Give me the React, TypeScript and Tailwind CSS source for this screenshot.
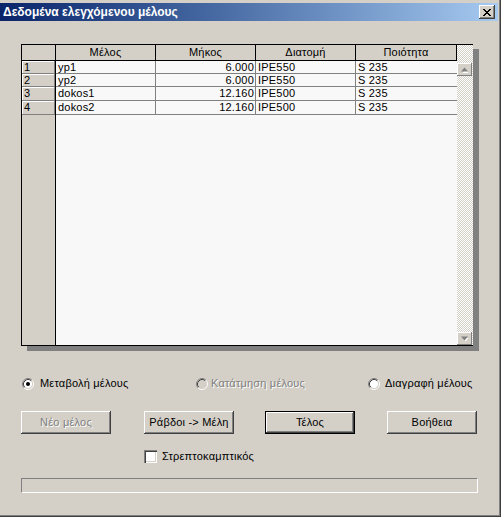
import React from "react";

const raised =
  "shadow-[inset_-1px_-1px_#404040,inset_1px_1px_#ffffff,inset_-2px_-2px_#808080,inset_2px_2px_#d4d0c8]";

function Radio({ checked, disabled }: { checked?: boolean; disabled?: boolean }) {
  return (
    <svg width="12" height="12" viewBox="0 0 12 12" className="shrink-0">
      <circle cx="6" cy="6" r="4.5" fill={disabled ? "#d4d0c8" : "#ffffff"} />
      <path d="M2.11 9.89 A5.5 5.5 0 0 1 9.89 2.11" stroke="#808080" strokeWidth="1" fill="none" />
      <path d="M9.89 2.11 A5.5 5.5 0 0 1 2.11 9.89" stroke="#ffffff" strokeWidth="1" fill="none" />
      <path d="M2.82 9.18 A4.5 4.5 0 0 1 9.18 2.82" stroke="#404040" strokeWidth="1" fill="none" />
      <path d="M9.18 2.82 A4.5 4.5 0 0 1 2.82 9.18" stroke="#d4d0c8" strokeWidth="1" fill="none" />
      {checked && <circle cx="6" cy="6" r="2" fill="#000000" />}
    </svg>
  );
}

function Arrow({ up }: { up?: boolean }) {
  return (
    <svg width="9" height="6" viewBox="0 0 9 6">
      {up ? (
        <>
          <path d="M1.5 5 L4.5 1.5 L7.5 5 Z" fill="#ffffff" transform="translate(1 1)" />
          <path d="M1 4.5 L4.5 0.5 L8 4.5 Z" fill="#808080" />
        </>
      ) : (
        <>
          <path d="M1.5 1 L4.5 4.5 L7.5 1 Z" fill="#ffffff" transform="translate(1 1)" />
          <path d="M1 0.5 L4.5 4.5 L8 0.5 Z" fill="#808080" />
        </>
      )}
    </svg>
  );
}

const rows = [
  { n: "1", m: "yp1", l: "6.000", d: "IPE550", q: "S 235", h: "h-[13px]" },
  { n: "2", m: "yp2", l: "6.000", d: "IPE550", q: "S 235", h: "h-[13px]" },
  { n: "3", m: "dokos1", l: "12.160", d: "IPE500", q: "S 235", h: "h-[14px]" },
  { n: "4", m: "dokos2", l: "12.160", d: "IPE500", q: "S 235", h: "h-[14px]" },
];

export default function App() {
  const disabledText = "text-[#808080] [text-shadow:1px_1px_0_#ffffff]";
  return (
    <div className="relative w-[501px] h-[517px] bg-[#d4d0c8] font-['Liberation_Sans',Arial,sans-serif] text-[11px] tracking-[0.2px] text-black flex flex-col shadow-[inset_-1px_-1px_#404040,inset_-2px_-2px_#808080] overflow-hidden">
      {/* Title bar */}
      <div className="mt-[3px] mr-[3px] h-[18px] bg-gradient-to-r from-[#0a246a] to-[#a6caf0] flex items-center justify-between pl-[3px] pr-[3px]">
        <span className="text-white font-bold text-[12px] tracking-normal leading-none">Δεδομένα ελεγχόμενου μέλους</span>
        <div className={`w-[16px] h-[14px] bg-[#d4d0c8] flex items-center justify-center ${raised}`}>
          <svg width="8" height="7" viewBox="0 0 8 7" shapeRendering="crispEdges">
            <path d="M0 0h2v1h1v1h2v-1h1v-1h2v1h-1v1h-1v1h-1v1h1v1h1v1h1v1h-2v-1h-1v-1h-2v1h-1v1h-2v-1h1v-1h1v-1h1v-1h-1v-1h-1v-1h-1z" fill="#000" />
          </svg>
        </div>
      </div>

      <div className="pl-[21px] pt-[23px] flex flex-col">
        {/* Grid */}
        <div className="w-[452px] h-[302px] border-l border-t border-b border-black flex shadow-[6px_5px_0_0_#808080]">
          <div className="w-[435px] flex flex-col">
            <div className="flex h-[16px] border-b border-black bg-[#d4d0c8] leading-[15px]">
              <div className="w-[34px] border-r border-black" />
              <div className="w-[100px] border-r border-black text-center">Μέλος</div>
              <div className="w-[100px] border-r border-black text-center">Μήκος</div>
              <div className="w-[100px] border-r border-black text-center">Διατομή</div>
              <div className="w-[101px] border-r border-black text-center">Ποιότητα</div>
            </div>
            {rows.map((r) => (
              <div key={r.n} className={`flex ${r.h} leading-[12px]`}>
                <div className="w-[34px] border-r border-black">
                  <div className="h-full bg-[#d4d0c8] pl-[2px] shadow-[inset_-1px_-1px_#808080,inset_1px_1px_#ffffff]">{r.n}</div>
                </div>
                <div className="w-[100px] border-r border-b border-[#808080] bg-[#f8f8f8] pl-[2px]">{r.m}</div>
                <div className="w-[100px] border-r border-b border-[#808080] bg-[#f8f8f8] pr-[1px] text-right">{r.l}</div>
                <div className="w-[100px] border-r border-b border-[#808080] bg-[#f8f8f8] pl-[2px]">{r.d}</div>
                <div className="w-[101px] border-b border-[#808080] bg-[#f8f8f8] pl-[2px]">{r.q}</div>
              </div>
            ))}
            <div className="flex flex-1">
              <div className="w-[34px] border-r border-black bg-[#d4d0c8]" />
              <div className="flex-1 bg-[#f8f8f8]" />
            </div>
          </div>
          <div className="w-[16px] flex flex-col justify-between pt-[18px] bg-[repeating-conic-gradient(#d4d0c8_0_25%,#ffffff_0_50%)] bg-[length:2px_2px]">
            <div className={`h-[13px] w-[15px] bg-[#d4d0c8] flex items-center justify-center shadow-[inset_-1px_-1px_#808080,inset_1px_1px_#ffffff]`}>
              <Arrow up />
            </div>
            <div className={`h-[13px] w-[15px] bg-[#d4d0c8] flex items-center justify-center shadow-[inset_-1px_-1px_#808080,inset_1px_1px_#ffffff]`}>
              <Arrow />
            </div>
          </div>
        </div>

        {/* Radios */}
        <div className="mt-[31px] h-[13px] flex items-center">
          <div className="w-[175px] pl-[1px] flex items-center gap-[6px]">
            <Radio checked />
            <span>Μεταβολή μέλους</span>
          </div>
          <div className="w-[172px] flex items-center gap-[3px]">
            <Radio disabled />
            <span className={disabledText}>Κατάτμηση μέλους</span>
          </div>
          <div className="flex items-center gap-[5px]">
            <Radio />
            <span>Διαγραφή μέλους</span>
          </div>
        </div>

        {/* Buttons */}
        <div className="mt-[21px] flex">
          <div className={`w-[90px] h-[23px] flex items-center justify-center ${raised}`}>
            <span className={disabledText}>Νέο μέλος</span>
          </div>
          <div className={`ml-[33px] w-[90px] h-[23px] flex items-center justify-center ${raised}`}>
            Ράβδοι -&gt; Μέλη
          </div>
          <div className="ml-[31px] w-[90px] h-[23px] border border-black">
            <div className={`w-full h-full flex items-center justify-center ${raised}`}>Τέλος</div>
          </div>
          <div className={`ml-[32px] w-[90px] h-[23px] flex items-center justify-center ${raised}`}>
            Βοήθεια
          </div>
        </div>

        {/* Checkbox */}
        <div className="mt-[16px] ml-[123px] flex items-center gap-[5px] h-[13px]">
          <div className="w-[13px] h-[13px] bg-white shadow-[inset_1px_1px_#808080,inset_2px_2px_#404040,inset_-1px_-1px_#ffffff,inset_-2px_-2px_#d4d0c8]" />
          <span>Στρεπτοκαμπτικός</span>
        </div>

        {/* Progress bar */}
        <div className="mt-[15px] w-[457px] h-[15px] border-t border-l border-[#808080] border-r-white border-b-white border-r border-b" />
      </div>
    </div>
  );
}
